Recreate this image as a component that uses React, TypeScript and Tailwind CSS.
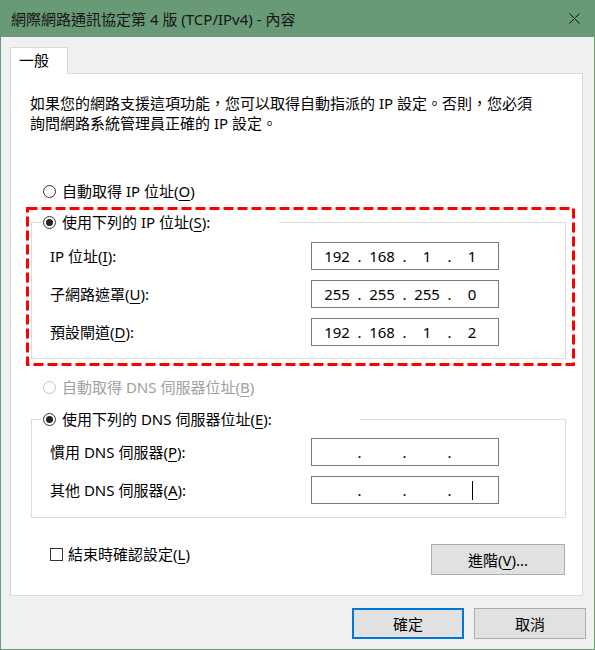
import React from "react";

function Radio({ checked, disabled, children }: { checked?: boolean; disabled?: boolean; children: React.ReactNode }) {
  return (
    <div className={`flex items-center h-[20px] leading-[20px] ${disabled ? "text-[#a0a0a0]" : "text-black"}`}>
      <span
        className={`flex items-center justify-center w-[13px] h-[13px] rounded-full border bg-white shrink-0 ${
          disabled ? "border-[#c4c4c4]" : "border-[#333333]"
        }`}
      >
        {checked && <span className="w-[7px] h-[7px] rounded-full bg-[#222222]" />}
      </span>
      <span className="ml-[6px] whitespace-nowrap">{children}</span>
    </div>
  );
}

function U({ children }: { children: React.ReactNode }) {
  return <span className="underline underline-offset-[3px] decoration-1">{children}</span>;
}

function IpBox({ parts, cursor }: { parts: string[]; cursor?: boolean }) {
  return (
    <div className="flex items-center w-[188px] h-[28px] border border-[#7a7a7a] bg-white pl-[7px] leading-[20px]">
      {parts.map((p, i) => (
        <React.Fragment key={i}>
          <span className="w-[36px] text-center flex justify-center items-center h-[20px]">
            {cursor && i === 3 ? <span className="block w-px h-[19px] bg-black" /> : p}
          </span>
          {i < 3 && <span className="w-[9px] text-center">.</span>}
        </React.Fragment>
      ))}
    </div>
  );
}

function Row({ label, children }: { label: React.ReactNode; children: React.ReactNode }) {
  return (
    <div className="flex items-center h-[28px]">
      <span className="w-[279px] pl-[18px] leading-[20px] whitespace-nowrap">{label}</span>
      {children}
    </div>
  );
}

export default function App() {
  return (
    <div className="relative w-[595px] h-[650px] font-['Noto_Sans','Noto_Sans_CJK_TC',sans-serif] text-[15px] text-black">
      <div className="flex flex-col w-full h-full bg-[#689a78]">
        {/* Title bar */}
        <div className="h-[37px] shrink-0 flex items-center justify-between pl-[11px] pr-[15px]">
          <span className="text-[15px] leading-[20px] text-[#151515] whitespace-nowrap">
            網際網路通訊協定第 4 版 (TCP/IPv4) - 內容
          </span>
          <svg width="11" height="11" viewBox="0 0 11 11" className="mt-[-1px]">
            <path d="M0.5 0.5 L10.5 10.5 M10.5 0.5 L0.5 10.5" stroke="#111" strokeWidth="1" fill="none" />
          </svg>
        </div>

        {/* Body */}
        <div className="flex-1 mx-px mb-px bg-[#f0f0f0] flex flex-col">
          {/* Tab */}
          <div className="mt-[10px] ml-[9px] flex">
            <div className="relative z-10 -mb-px w-[58px] h-[27px] bg-white border border-b-0 border-[#d9d9d9] pl-[8px] pt-[2px] leading-[20px]">
              一般
            </div>
          </div>

          {/* Panel */}
          <div className="ml-[9px] w-[573px] h-[523px] bg-white border border-[#d9d9d9] flex flex-col">
            <p className="mt-[19px] ml-[19px] leading-[20px] whitespace-nowrap">
              如果您的網路支援這項功能，您可以取得自動指派的 IP 設定。否則，您必須
              <br />
              詢問網路系統管理員正確的 IP 設定。
            </p>

            <div className="mt-[48px] ml-[32px]">
              <Radio>
                自動取得 IP 位址(<U>O</U>)
              </Radio>
            </div>

            {/* Group 1 */}
            <div className="relative mt-[21px] ml-[20px] w-[535px] h-[137px] border border-[#dcdcdc] pt-[19px] flex flex-col gap-[10px]">
              <div className="absolute left-[9px] top-[-11px] w-[238px] pl-[2px] bg-white">
                <Radio checked>
                  使用下列的 IP 位址(<U>S</U>):
                </Radio>
              </div>
              <Row label={<>IP 位址(<U>I</U>):</>}>
                <IpBox parts={["192", "168", "1", "1"]} />
              </Row>
              <Row label={<>子網路遮罩(<U>U</U>):</>}>
                <IpBox parts={["255", "255", "255", "0"]} />
              </Row>
              <Row label={<>預設閘道(<U>D</U>):</>}>
                <IpBox parts={["192", "168", "1", "2"]} />
              </Row>
            </div>

            <div className="mt-[18px] ml-[32px]">
              <Radio disabled>
                自動取得 DNS 伺服器位址(<U>B</U>)
              </Radio>
            </div>

            {/* Group 2 */}
            <div className="relative mt-[22px] ml-[20px] w-[535px] h-[99px] border border-[#dcdcdc] pt-[18px] flex flex-col gap-[10px]">
              <div className="absolute left-[9px] top-[-11px] w-[319px] pl-[2px] bg-white">
                <Radio checked>
                  使用下列的 DNS 伺服器位址(<U>E</U>):
                </Radio>
              </div>
              <Row label={<>慣用 DNS 伺服器(<U>P</U>):</>}>
                <IpBox parts={["", "", "", ""]} />
              </Row>
              <Row label={<>其他 DNS 伺服器(<U>A</U>):</>}>
                <IpBox parts={["", "", "", ""]} cursor />
              </Row>
            </div>

            {/* Bottom row */}
            <div className="mt-[26px] flex justify-between items-start pl-[39px] pr-[17px]">
              <div className="flex items-center h-[20px] leading-[20px]">
                <span className="w-[13px] h-[13px] border border-[#333333] bg-white" />
                <span className="ml-[5px] whitespace-nowrap">
                  結束時確認設定(<U>L</U>)
                </span>
              </div>
              <button className="w-[134px] h-[31px] bg-[#e1e1e1] border border-[#adadad] leading-[20px]">
                進階(<U>V</U>)...
              </button>
            </div>
          </div>

          {/* Dialog buttons */}
          <div className="mt-[12px] flex justify-end gap-[10px] pr-[8px]">
            <button className="w-[112px] h-[31px] bg-[#e1e1e1] border-2 border-[#0078d7] leading-[20px]">確定</button>
            <button className="w-[112px] h-[31px] bg-[#e1e1e1] border border-[#adadad] leading-[20px]">取消</button>
          </div>
        </div>
      </div>

      {/* Annotation overlay: red dashed highlight */}
      <svg className="absolute left-0 top-0 pointer-events-none" width="595" height="650">
        <rect
          x="27.5"
          y="208.5"
          width="546"
          height="156"
          fill="none"
          stroke="#ff0000"
          strokeWidth="3"
          strokeDasharray="10 4"
        />
      </svg>
    </div>
  );
}
